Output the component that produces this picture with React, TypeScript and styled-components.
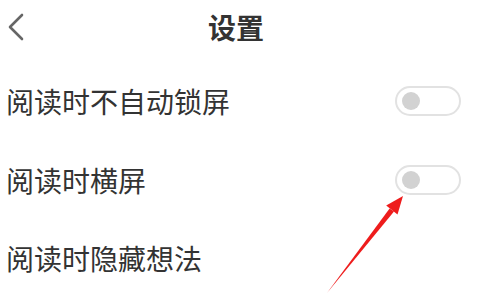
import React from "react";
import styled, { createGlobalStyle } from "styled-components";

const GlobalStyle = createGlobalStyle`
  html, body {
    margin: 0;
    padding: 0;
    background: #ffffff;
  }
  body {
    font-family: "Noto Sans CJK SC", "Noto Sans", sans-serif;
  }
`;

const Page = styled.div`
  position: relative;
  width: 480px;
  height: 307px;
  overflow: hidden;
  background: #ffffff;
`;

const Header = styled.div`
  height: 54px;
  display: flex;
  align-items: center;
  justify-content: center;
  position: relative;
`;

const BackButton = styled.button`
  position: absolute;
  left: 4px;
  top: 11px;
  width: 24px;
  height: 32px;
  padding: 0;
  border: none;
  background: none;
  display: flex;
  align-items: center;
  justify-content: center;
`;

const Title = styled.h1`
  margin: 0 0 0 -8px;
  font-size: 28px;
  font-weight: 700;
  color: #333333;
  line-height: 1;
`;

const List = styled.div`
  padding-top: 8px;
  display: flex;
  flex-direction: column;
`;

const Row = styled.div`
  height: 78.5px;
  display: flex;
  align-items: center;
  justify-content: space-between;
  padding: 0 19px 0 6px;
`;

const Label = styled.span`
  font-size: 28px;
  color: #333333;
  line-height: 1;
`;

const Switch = styled.div`
  box-sizing: border-box;
  width: 66px;
  height: 30px;
  border: 2px solid #e2e2e2;
  border-radius: 15px;
  display: flex;
  align-items: center;
  padding-left: 5px;
  background: #ffffff;
`;

const Knob = styled.span`
  width: 18px;
  height: 18px;
  border-radius: 50%;
  background: #d2d2d2;
`;

const Annotation = styled.svg`
  position: absolute;
  left: 0;
  top: 0;
  pointer-events: none;
`;

const rows = [
  { label: "阅读时不自动锁屏", toggle: true },
  { label: "阅读时横屏", toggle: true },
  { label: "阅读时隐藏想法", toggle: false },
];

export default function App() {
  return (
    <Page>
      <GlobalStyle />
      <Header>
        <BackButton aria-label="返回">
          <svg width="20" height="28" viewBox="0 0 20 28">
            <path
              d="M16 2 L4 14 L16 26"
              fill="none"
              stroke="#666666"
              strokeWidth="2.6"
              strokeLinecap="round"
              strokeLinejoin="round"
            />
          </svg>
        </BackButton>
        <Title>设置</Title>
      </Header>
      <List>
        {rows.map((r) => (
          <Row key={r.label}>
            <Label>{r.label}</Label>
            {r.toggle && (
              <Switch>
                <Knob />
              </Switch>
            )}
          </Row>
        ))}
      </List>
      <Annotation width="480" height="307" viewBox="0 0 480 307">
        <polygon points="327,293 394,211.6 389.6,208.4" fill="#ee1c1c" />
        <polygon points="403,196 397.5,214.5 386.2,205.5" fill="#ee1c1c" />
      </Annotation>
    </Page>
  );
}
